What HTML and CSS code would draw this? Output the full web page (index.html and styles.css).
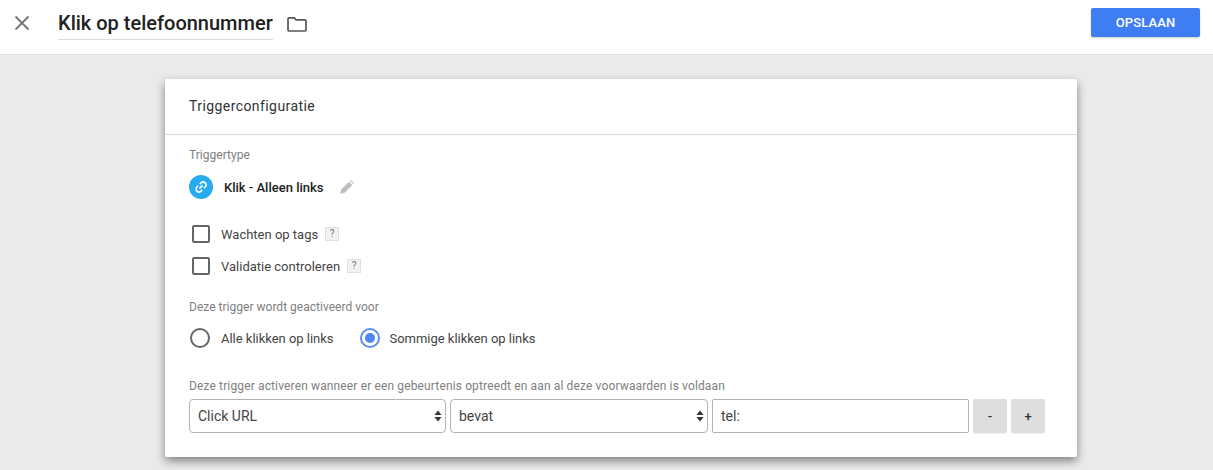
FILE: index.html
```html
<!DOCTYPE html>
<html lang="nl">
<head>
<meta charset="utf-8">
<title>Klik op telefoonnummer</title>
<link rel="stylesheet" href="styles.css">
</head>
<body>
<header class="topbar">
  <svg class="close" width="16" height="16" viewBox="0 0 16 16"><path d="M1.500 1.500L14.500 14.500M14.500 1.500L1.500 14.500" stroke="#757575" stroke-width="1.800" fill="none"/></svg>
  <div class="name">Klik op telefoonnummer</div>
  <svg class="folder" width="20" height="16" viewBox="0 0 20 16"><path d="M1 3a1.2 1.2 0 0 1 1.2-1.2h5l2 2h8.600a1.200 1.200 0 0 1 1.200 1.200v8.800a1.200 1.200 0 0 1-1.200 1.200H2.200A1.200 1.200 0 0 1 1 13.800z" fill="none" stroke="#555" stroke-width="1.700"/></svg>
  <button class="save">OPSLAAN</button>
</header>
<main class="canvas">
  <section class="card">
    <h2 class="card-title">Triggerconfiguratie</h2>
    <div class="card-body">
      <div class="label">Triggertype</div>
      <div class="type">
        <span class="type-icon"><svg width="14" height="14" viewBox="0 0 24 24"><g fill="none" stroke="#fff" stroke-width="2.600" transform="rotate(-45 12 12)"><path d="M10 7H7a5 5 0 0 0 0 10h3"/><path d="M14 7h3a5 5 0 0 1 0 10h-3"/><path d="M8 12h8"/></g></svg></span>
        <span class="type-name">Klik - Alleen links</span>
        <svg class="pencil" width="16" height="16" viewBox="0 0 24 24"><path d="M2 22l1.500-6.500L15 4l5 5L8.500 20.500zM16.500 2.500l1-1 5 5-1 1z" fill="#bdbdbd"/></svg>
      </div>
      <div class="checks">
        <label class="check"><span class="box"></span>Wachten op tags<span class="help">?</span></label>
        <label class="check"><span class="box"></span>Validatie controleren<span class="help">?</span></label>
      </div>
      <div class="label fires">Deze trigger wordt geactiveerd voor</div>
      <div class="radios">
        <label class="radio"><span class="dot"></span>Alle klikken op links</label>
        <label class="radio"><span class="dot on"></span>Sommige klikken op links</label>
      </div>
      <div class="label cond">Deze trigger activeren wanneer er een gebeurtenis optreedt en aan al deze voorwaarden is voldaan</div>
      <div class="row">
        <div class="field sel first">Click URL<svg class="arrows" width="8" height="12" viewBox="0 0 8 12"><path d="M4 0.500L7.500 5H0.500zM4 11.500L0.500 7H7.500z" fill="#333"/></svg></div>
        <div class="field sel">bevat<svg class="arrows" width="8" height="12" viewBox="0 0 8 12"><path d="M4 0.500L7.500 5H0.500zM4 11.500L0.500 7H7.500z" fill="#333"/></svg></div>
        <div class="field val">tel:</div>
        <button class="step">-</button>
        <button class="step">+</button>
      </div>
    </div>
  </section>
</main>
</body>
</html>
```
FILE: styles.css
```css
* { box-sizing: border-box; }
html, body { margin: 0; height: 470px; overflow: hidden; }
body { font-family: Roboto, "Liberation Sans", sans-serif; color: #212121; background: #eaeaea; }
.topbar { height: 55px; background: #fff; border-bottom: 1px solid #e0e0e0; display: flex; align-items: center; padding: 0 13px 8px 14px; }
.close { flex: none; }
.name { margin-left: 28px; margin-top: 2px; font-size: 20px; font-weight: 500; line-height: 31px; height: 32px; width: 215px; border-bottom: 1px solid #dcdcdc; white-space: nowrap; }
.folder { margin-left: 14px; margin-top: 1px; flex: none; }
.save { margin-left: auto; margin-top: -1px; width: 109px; height: 29px; background: #3f7df3; border: 0; border-radius: 2px; color: #fff; font: 500 13px Roboto, sans-serif; letter-spacing: .1px; box-shadow: 0 1px 2px rgba(0,0,0,.2); }
.canvas { padding: 24px 0 0 165px; }
.card { width: 912px; height: 378px; background: #fff; border-radius: 2px; box-shadow: 0 4px 10px rgba(0,0,0,.45); }
.card-title { margin: 0; height: 56px; padding: 18px 24px 0; font-size: 14px; font-weight: 400; line-height: 18px; letter-spacing: .42px; color: #333; border-bottom: 1px solid #dadada; }
.card-body { padding: 13px 24px 0; }
.label { font-size: 12px; line-height: 14px; color: #808080; letter-spacing: .02px; white-space: nowrap; }
.type { display: flex; align-items: center; height: 24px; margin-top: 13px; }
.type-icon { width: 24px; height: 24px; border-radius: 50%; background: #29abf2; display: flex; align-items: center; justify-content: center; }
.type-name { margin-left: 11px; font-size: 13px; font-weight: 500; }
.pencil { margin-left: 16px; }
.checks { margin-top: 26px; padding-left: 3px; }
.check { display: flex; align-items: center; height: 18px; margin-bottom: 14px; font-size: 13px; color: #444; }
.box { width: 18px; height: 18px; border: 2px solid #666; border-radius: 2px; margin-right: 11px; }
.help { margin-left: 7px; width: 14px; height: 14px; background: #f2f2f2; border: 1px solid #e0e0e0; font-size: 10px; line-height: 12px; text-align: center; color: #777; }
.fires { margin-top: 25px; }
.radios { display: flex; margin-top: 14px; height: 20px; gap: 26px; padding-left: 1px; }
.radio { display: flex; align-items: center; font-size: 13px; color: #444; letter-spacing: -.02px; }
.dot { width: 20px; height: 20px; border: 2px solid #666; border-radius: 50%; margin-right: 10px; display: flex; align-items: center; justify-content: center; }
.radio:first-child .dot { margin-right: 11px; }
.dot.on { border-color: #5b8def; }
.dot.on::after { content: ""; width: 10px; height: 10px; border-radius: 50%; background: #4f87f0; }
.cond { margin-top: 31px; letter-spacing: .135px; }
.row { display: flex; gap: 4px; margin-top: 6px; }
.field { height: 34px; border: 1px solid #b4b4b4; border-radius: 4px; font-size: 14px; line-height: 32px; padding-left: 8px; color: #444; background: #fff; }
.sel { width: 258px; position: relative; }
.sel.first { width: 257px; }
.arrows { position: absolute; right: 3px; top: 10px; }
.val { width: 257px; border-radius: 2px; }
.step { width: 34px; height: 34px; background: #dedede; border: 0; border-radius: 2px; font: 500 13px Roboto, sans-serif; color: #333; padding: 0; box-shadow: 0 1px 1px rgba(0,0,0,.05); }
```
